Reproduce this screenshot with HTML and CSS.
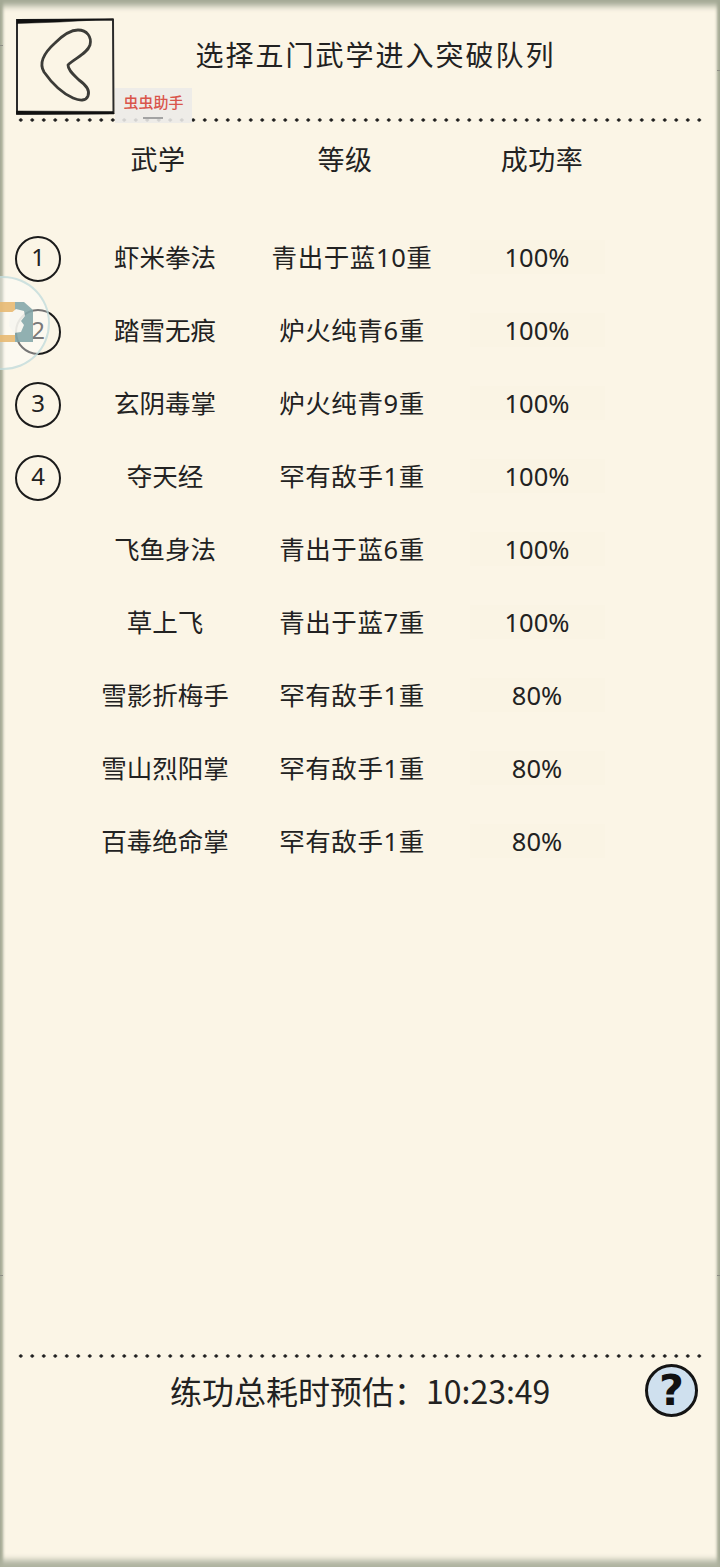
FILE: index.html
```html
<!DOCTYPE html>
<html lang="zh">
<head>
<meta charset="utf-8">
<title>突破队列</title>
<link rel="stylesheet" href="styles.css">
</head>
<body>
<div class="page">
  <header class="top">
    <div class="back">
      <svg class="back-svg" viewBox="0 0 100 100" width="100" height="100">
        <path class="box" d="M2 4 L98 3.5 L98.5 97 L2 97.5 Z"/>
        <path class="box-thick" d="M2 3.5 L45 3.5 L98 3 L45 6 L2 7.5 Z"/>
        <path class="box-thick" d="M1.5 95 L98 95.5 L99 98 L1.5 98.5 Z"/>
        <path class="chev" d="M40 27 C48 19 56 14 63 14 C72 14 77 21 75 29 C72 38 60 42 53 49 C53 54 58 58 64 64 C71 69 75 75 73 80 C71 85 65 85 58 82 C47 77 36 66 29 56 C23 46 30 36 40 27 Z"/>
      </svg>
    </div>
    <h1 class="title">选择五门武学进入突破队列</h1>
    <span class="tag">虫虫助手</span>
  </header>
  <div class="dots"></div>
  <div class="heads">
    <div></div>
    <div class="head">武学</div>
    <div class="head">等级</div>
    <div class="head">成功率</div>
  </div>
  <main class="rows">
    <div class="row"><span class="num">1</span><span class="cell">虾米拳法</span><span class="cell level">青出于蓝10重</span><span class="rate">100%</span></div>
    <div class="row"><span class="num">2</span><span class="cell">踏雪无痕</span><span class="cell level">炉火纯青6重</span><span class="rate">100%</span></div>
    <div class="row"><span class="num">3</span><span class="cell">玄阴毒掌</span><span class="cell level">炉火纯青9重</span><span class="rate">100%</span></div>
    <div class="row"><span class="num">4</span><span class="cell">夺天经</span><span class="cell level">罕有敌手1重</span><span class="rate">100%</span></div>
    <div class="row"><span></span><span class="cell">飞鱼身法</span><span class="cell level">青出于蓝6重</span><span class="rate">100%</span></div>
    <div class="row"><span></span><span class="cell">草上飞</span><span class="cell level">青出于蓝7重</span><span class="rate">100%</span></div>
    <div class="row"><span></span><span class="cell">雪影折梅手</span><span class="cell level">罕有敌手1重</span><span class="rate">80%</span></div>
    <div class="row"><span></span><span class="cell">雪山烈阳掌</span><span class="cell level">罕有敌手1重</span><span class="rate">80%</span></div>
    <div class="row"><span></span><span class="cell">百毒绝命掌</span><span class="cell level">罕有敌手1重</span><span class="rate">80%</span></div>
  </main>
  <footer class="bottom">
    <div class="dots"></div>
    <div class="foot">
      <div class="eta">练功总耗时预估：10:23:49</div>
      <button class="help"><span>?</span></button>
    </div>
  </footer>
  <div class="ball">
    <svg viewBox="0 0 34 41" width="34" height="41">
      <rect x="0" y="0" width="15" height="10" fill="#e8b970"/>
      <rect x="0" y="33" width="15" height="7" fill="#e8b970"/>
      <path d="M15 0 H24 L33 8 V40 H15 Z" fill="#83a6a9"/>
      <path d="M10 12 L16 7 L24 9 L25 14 L21 19 L24 23 L21 30 L14 31 L9 24 Z" fill="#f7f6f0"/>
    </svg>
  </div>
  <div class="edge edge-l1"></div>
  <div class="edge edge-r1"></div>
  <div class="edge edge-l2"></div>
  <div class="edge edge-r2"></div>
</div>
</body>
</html>
```
FILE: styles.css
```css
* { box-sizing: border-box; }
html, body { margin: 0; padding: 0; }
body {
  width: 720px;
  height: 1567px;
  overflow: hidden;
  background: #fbf5e6;
  font-family: "Noto Sans", "Noto Sans CJK SC", sans-serif;
  color: #222;
}
.page {
  position: relative;
  width: 720px;
  height: 1567px;
  display: flex;
  flex-direction: column;
  background: #fbf5e6;
  box-shadow: inset 0 10px 6px -4px #a3a894, inset 0 -11px 6px -4px #aeb2a0, inset 5px 0 3px -2px #a3a894, inset -5px 0 3px -2px #a3a894;
  overflow: hidden;
}
.top {
  position: relative;
  display: flex;
  align-items: flex-start;
  height: 117px;
  padding: 16px 84px 0 15px;
}
.back { width: 100px; height: 100px; flex: none; }
.back-svg { display: block; }
.box { fill: none; stroke: #2a2a2a; stroke-width: 2; }
.box-thick { fill: #111; stroke: #111; stroke-width: .5; }
.chev { fill: none; stroke: #3c3c38; stroke-width: 2.8; stroke-linejoin: round; }
.title {
  flex: 1;
  margin: 0;
  height: 78px;
  font-size: 28px;
  font-weight: 400;
  line-height: 78px;
  letter-spacing: 2px;
  text-align: center;
  white-space: nowrap;
}
.tag {
  position: absolute;
  left: 115px;
  top: 88px;
  width: 77px;
  height: 35px;
  padding-top: 4px;
  background: rgba(236, 234, 232, .88);
  color: #d9554b;
  font-family: "Noto Sans CJK SC", sans-serif;
  font-size: 15px;
  font-weight: 500;
  line-height: 20px;
  text-align: center;
}
.tag::after {
  content: "";
  position: absolute;
  left: 28px;
  top: 29px;
  width: 20px;
  height: 2px;
  background: #a3a3a3;
}
.dots {
  height: 4px;
  margin: 1px 15px 0;
  background-image: radial-gradient(circle at 50% 2px, #1c1c1c 1.4px, transparent 1.9px);
  background-size: 11.5px 4px;
  background-repeat: round no-repeat;
}
.heads {
  display: grid;
  grid-template-columns: 62px 192px 182px 212px;
  margin-top: 18px;
  height: 40px;
}
.head {
  font-size: 27px;
  letter-spacing: .5px;
  line-height: 40px;
  text-align: center;
}
.rows {
  flex: 1;
  margin-top: 40px;
  display: flex;
  flex-direction: column;
}
.row {
  display: grid;
  grid-template-columns: 62px 206px 168px 202px;
  align-items: center;
  height: 73px;
  font-size: 25.5px;
  line-height: 34px;
  text-align: center;
}
.num {
  justify-self: end;
  width: 46px;
  height: 46px;
  border: 2.8px solid #1b1b1b;
  border-radius: 50%;
  font-size: 24px;
  line-height: 37px;
  margin-top: 5px;
  margin-right: 1px;
}
.cell { white-space: nowrap; }
.level { letter-spacing: .6px; }
.rate {
  justify-self: center;
  width: 135px;
  height: 34px;
  background: #faf4e4;
}
.bottom { height: 214px; flex: none; }
.foot {
  position: relative;
  display: flex;
  align-items: center;
  justify-content: space-between;
  height: 66px;
  padding: 0 22px 2px 170px;
}
.eta {
  font-family: "Noto Sans CJK SC", sans-serif;
  font-size: 32px;
  line-height: 64px;
  white-space: nowrap;
}
.help {
  width: 53px;
  height: 53px;
  padding: 0;
  border: 3px solid #141414;
  border-radius: 50%;
  background: #cfe0ee;
  color: #111;
  font-family: "DejaVu Sans", sans-serif;
  font-size: 43px;
  font-weight: 700;
  line-height: 46px;
  text-align: center;
}
.ball {
  position: absolute;
  left: -44px;
  top: 276px;
  width: 94px;
  height: 94px;
  padding: 24px 0 0 42px;
  border: 2px solid rgba(185, 215, 215, .7);
  border-radius: 50%;
  background: rgba(255, 255, 255, .4);
}
.ball svg { display: block; opacity: .88; }
.edge { position: absolute; width: 3px; height: 1px; background: #8d8d84; }
.edge-l1 { left: 0; top: 45px; }
.edge-r1 { right: 0; top: 70px; }
.edge-l2 { left: 0; top: 1275px; }
.edge-r2 { right: 0; top: 1275px; }
```
